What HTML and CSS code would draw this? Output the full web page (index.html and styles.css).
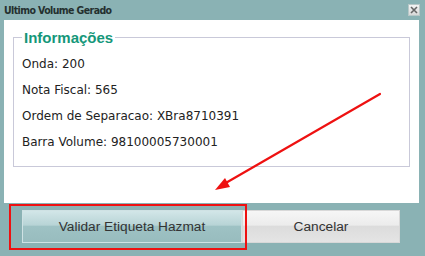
FILE: index.html
```html
<!DOCTYPE html>
<html>
<head>
<meta charset="utf-8">
<link rel="stylesheet" href="styles.css">
</head>
<body>
<div class="window">
  <div class="titlebar">
    <span class="title">Ultimo Volume Gerado</span>
    <span class="close"><svg width="8" height="8" viewBox="0 0 8 8"><path d="M1 1L7 7M7 1L1 7" stroke="#666" stroke-width="1.6"/></svg></span>
  </div>
  <div class="content">
    <fieldset class="info">
      <legend>Informações</legend>
      <div class="row">Onda: 200</div>
      <div class="row">Nota Fiscal: 565</div>
      <div class="row">Ordem de Separacao: XBra8710391</div>
      <div class="row">Barra Volume: 98100005730001</div>
    </fieldset>
  </div>
  <div class="actions">
    <button class="btn btn-primary">Validar Etiqueta Hazmat</button>
    <button class="btn btn-secondary">Cancelar</button>
  </div>
  <div class="highlight"></div>
  <svg class="arrow" width="425" height="256" viewBox="0 0 425 256">
    <line x1="380" y1="94" x2="224" y2="184" stroke="#ee1111" stroke-width="2.2" stroke-linecap="round"/>
    <polygon points="215,190 225,178 230,187" fill="#ee1111"/>
  </svg>
</div>
</body>
</html>
```
FILE: styles.css
```css
html, body {
  margin: 0;
  padding: 0;
}
body {
  background: #8ab2b4;
  font-family: "DejaVu Sans", sans-serif;
}
.window {
  position: relative;
  width: 425px;
  height: 256px;
  background: #8ab2b4;
  overflow: hidden;
}
.titlebar {
  height: 20px;
  display: flex;
  align-items: center;
  justify-content: space-between;
  padding: 0 5px 0 4px;
}
.title {
  font-family: "DejaVu Sans Condensed", "DejaVu Sans", sans-serif;
  font-weight: bold;
  font-size: 10.5px;
  letter-spacing: -0.6px;
  color: #24302f;
}
.close {
  width: 12px;
  height: 12px;
  background: linear-gradient(#f4f4f4, #d8d8d8);
  border: 1px solid #b8c8c8;
  display: flex;
  align-items: center;
  justify-content: center;
  box-sizing: border-box;
}
.content {
  background: #ffffff;
  margin: 0 6px 0 4px;
  height: 183px;
  padding: 9px 9px 0 9px;
  box-sizing: border-box;
}
.info {
  margin: 0;
  border: 1px solid #c9c9d9;
  padding: 5px 0 0 8px;
  height: 138px;
  box-sizing: border-box;
}
.info legend {
  font-family: "Liberation Sans", Arial, sans-serif;
  font-weight: bold;
  font-size: 15px;
  color: #15977a;
  padding: 0 2px;
  margin-left: 0;
}
.row {
  font-size: 12px;
  color: #222;
  height: 26px;
  line-height: 26px;
}
.actions {
  display: flex;
  padding: 7px 0 0 22px;
}
.btn {
  height: 33px;
  font-family: "Liberation Sans", Arial, sans-serif;
  font-size: 13.7px;
  color: #333;
  border: 1px solid #c4d4d6;
  margin: 0;
  padding: 0;
}
.btn-primary {
  width: 220px;
  background: linear-gradient(#d2e6e8 0%, #b8d4d6 45%, #9ec2c4 50%, #98bcbe 100%);
  border-color: #cfe2e4;
}
.btn-secondary {
  width: 158px;
  background: linear-gradient(#f6f6f6 0%, #ececec 45%, #dcdcdc 50%, #e4e4e4 100%);
  border-color: #d8d8d8;
}
.highlight {
  position: absolute;
  left: 9px;
  top: 204px;
  width: 238px;
  height: 46px;
  border: 2px solid #ee1111;
  box-sizing: border-box;
}
.arrow {
  position: absolute;
  left: 0;
  top: 0;
  pointer-events: none;
}
```
